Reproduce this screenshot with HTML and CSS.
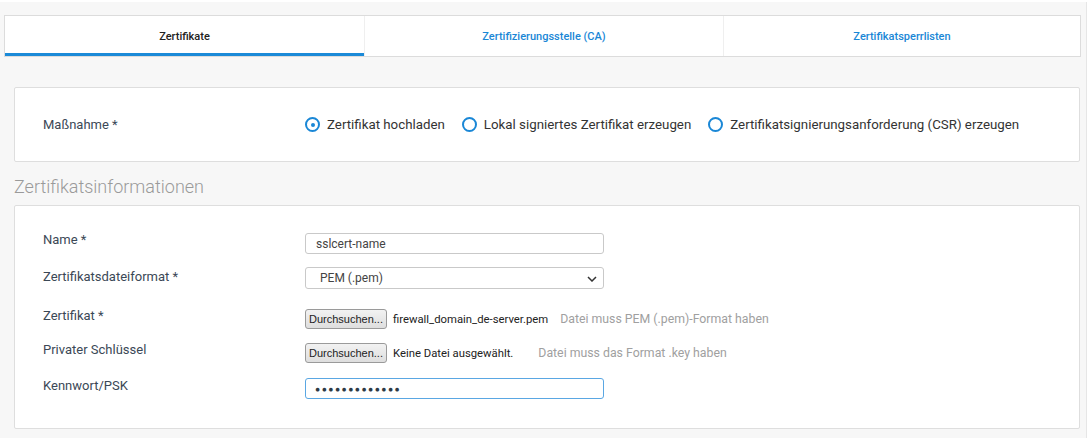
FILE: index.html
```html
<!DOCTYPE html>
<html lang="de">
<head>
<meta charset="utf-8">
<title>Zertifikate</title>
<link rel="stylesheet" href="styles.css">
</head>
<body>
<div class="page">
  <nav class="tabs">
    <div class="tab active">Zertifikate</div>
    <div class="tab">Zertifizierungsstelle (CA)</div>
    <div class="tab">Zertifikatsperrlisten</div>
  </nav>

  <section class="card card-action">
    <div class="label">Maßnahme *</div>
    <div class="radios">
      <label class="radio"><span class="dot checked"></span>Zertifikat hochladen</label>
      <label class="radio"><span class="dot"></span>Lokal signiertes Zertifikat erzeugen</label>
      <label class="radio"><span class="dot"></span>Zertifikatsignierungsanforderung (CSR) erzeugen</label>
    </div>
  </section>

  <h2 class="section-title">Zertifikatsinformationen</h2>

  <section class="card card-form">
    <div class="row r1">
      <div class="label">Name *</div>
      <div class="field"><div class="input">sslcert-name</div></div>
    </div>
    <div class="row r2">
      <div class="label">Zertifikatsdateiformat *</div>
      <div class="field">
        <div class="input select">PEM (.pem)
          <svg class="chev" width="10" height="6" viewBox="0 0 10 6"><path d="M1 1l4 4 4-4" fill="none" stroke="#333" stroke-width="1.5"/></svg>
        </div>
      </div>
    </div>
    <div class="row r3">
      <div class="label">Zertifikat *</div>
      <div class="field file">
        <span class="btn">Durchsuchen...</span>
        <span class="fname">firewall_domain_de-server.pem</span>
        <span class="help">Datei muss PEM (.pem)-Format haben</span>
      </div>
    </div>
    <div class="row r4">
      <div class="label">Privater Schlüssel</div>
      <div class="field file">
        <span class="btn">Durchsuchen...</span>
        <span class="fname">Keine Datei ausgewählt.</span>
        <span class="help help2">Datei muss das Format .key haben</span>
      </div>
    </div>
    <div class="row r5">
      <div class="label">Kennwort/PSK</div>
      <div class="field"><div class="input pwd">●●●●●●●●●●●●●</div></div>
    </div>
  </section>
</div>
</body>
</html>
```

FILE: styles.css
```css
html, body {
  margin: 0;
  padding: 0;
  background: #ffffff;
}

body {
  font-family: Roboto, "Liberation Sans", sans-serif;
  color: #3b4856;
}

.page {
  margin-top: 2px;
  height: 436px;
  background: #f7f7f7;
  border-right: 1px solid #e6e6e6;
  padding: 13px 5px 0 4px;
  box-sizing: border-box;
  width: 1087px;
}

.tabs {
  display: grid;
  grid-template-columns: 359px 359px 1fr;
  background: #fff;
  border: 1px solid #dcdcdc;
  height: 42px;
  box-sizing: border-box;
}

.tab {
  display: flex;
  align-items: center;
  justify-content: center;
  font-size: 11px;
  font-weight: 500;
  color: #1a87d6;
  border-left: 1px solid #efefef;
  padding-top: 1px;
}

.tab:first-child {
  border-left: none;
}

.tab.active {
  color: #222;
  border-bottom: 3px solid #1b8ad8;
  padding-top: 4px;
}

.card {
  background: #fff;
  border: 1px solid #dedede;
  border-radius: 2px;
  margin-left: 10px;
  margin-right: 1px;
  box-sizing: border-box;
}

.card-action {
  margin-top: 30px;
  height: 75px;
  display: flex;
  align-items: center;
  padding-left: 28px;
}

.label {
  width: 262px;
  flex: none;
  font-size: 13px;
  color: #3b4856;
}

.radios {
  display: flex;
  align-items: center;
  gap: 17px;
}

.radio {
  display: flex;
  align-items: center;
  gap: 7px;
  font-size: 13.3px;
  color: #333;
}

.dot {
  width: 15px;
  height: 15px;
  border: 2px solid #1a87d6;
  border-radius: 50%;
  box-sizing: border-box;
  position: relative;
}

.dot.checked::after {
  content: "";
  position: absolute;
  left: 3.5px;
  top: 3.5px;
  width: 4px;
  height: 4px;
  border-radius: 50%;
  background: #1a87d6;
}

.section-title {
  margin: 14px 0 0 10px;
  font-size: 18px;
  font-weight: 300;
  color: #9a9a9a;
  line-height: 22px;
  height: 29px;
}

.card-form {
  height: 224px;
  padding: 27px 0 0 28px;
}

.row {
  display: flex;
  align-items: flex-start;
}

.row .label {
  line-height: 14px;
}

.r1 { margin-bottom: 13px; }
.r2 { margin-bottom: 20px; }
.r3 { margin-bottom: 14px; }
.r4 { margin-bottom: 15px; }

.r1 .label { margin-top: 0; }
.r2 .label { margin-top: 3px; }
.r3 .label { margin-top: 0; }
.r4 .label { margin-top: 0; }
.r5 .label { margin-top: 1px; }

.input {
  width: 299px;
  height: 21px;
  box-sizing: border-box;
  border: 1px solid #c9c9c9;
  border-radius: 3px;
  font-size: 12px;
  color: #444;
  padding-left: 10px;
  display: flex;
  align-items: center;
}

.select {
  height: 22px;
  padding-left: 14px;
  position: relative;
}

.chev {
  position: absolute;
  right: 6px;
  top: 8px;
}

.pwd {
  border-color: #5aa7e3;
  font-size: 8.5px;
  letter-spacing: 1.5px;
  color: #2e3a46;
  padding-left: 9px;
}

.file {
  display: flex;
  align-items: center;
  height: 20px;
  font-family: "Liberation Sans", Arial, sans-serif;
}

.btn {
  width: 82px;
  height: 20px;
  box-sizing: border-box;
  border: 1px solid #9a9a9a;
  border-radius: 3px;
  background: linear-gradient(#f2f2f2, #dedede);
  font-size: 11px;
  color: #222;
  display: flex;
  align-items: center;
  justify-content: center;
}

.fname {
  margin-left: 6px;
  font-size: 11.3px;
  color: #222;
  font-family: Roboto, sans-serif;
}

.help {
  margin-left: 12px;
  font-size: 12.3px;
  color: #a0a0a0;
  font-family: Roboto, sans-serif;
}

.help2 {
  margin-left: 25px;
}
```
